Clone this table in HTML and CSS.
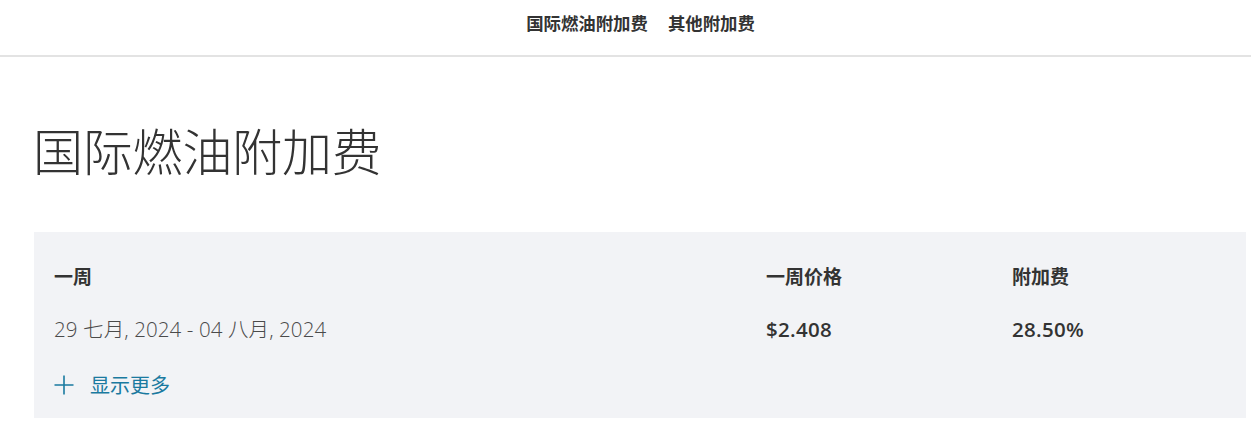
FILE: index.html
```html
<!DOCTYPE html>
<html lang="zh-CN">
<head>
<meta charset="utf-8">
<title>国际燃油附加费</title>
<link rel="stylesheet" href="styles.css">
</head>
<body>
<header class="topbar">
  <nav class="topnav">
    <a class="topnav-link" href="#intl">国际燃油附加费</a>
    <a class="topnav-link" href="#other">其他附加费</a>
  </nav>
</header>
<main class="content">
  <h1 class="page-title" id="intl">国际燃油附加费</h1>
  <section class="panel">
    <div class="row row-head">
      <div class="cell cell-week">一周</div>
      <div class="cell cell-price">一周价格</div>
      <div class="cell cell-fee">附加费</div>
    </div>
    <div class="row row-data">
      <div class="cell cell-week date">29 七月, 2024 - 04 八月, 2024</div>
      <div class="cell cell-price value">$2.408</div>
      <div class="cell cell-fee value">28.50%</div>
    </div>
    <a class="show-more" href="#more">
      <svg class="plus" width="20" height="20" viewBox="0 0 20 20" aria-hidden="true">
        <path d="M10 0.5V19.5M0.5 10H19.5" stroke="currentColor" stroke-width="1.6" fill="none"/>
      </svg>
      <span>显示更多</span>
    </a>
  </section>
</main>
</body>
</html>
```
FILE: styles.css
```css
html, body {
  margin: 0;
  padding: 0;
  background: #ffffff;
}
body {
  font-family: "Open Sans", "Noto Sans CJK SC", sans-serif;
  color: #333333;
}
.topbar {
  height: 55px;
  border-bottom: 2px solid #e3e3e3;
  display: flex;
  align-items: center;
  justify-content: center;
}
.topnav {
  display: flex;
  gap: 20px;
  margin-left: 30px;
  margin-top: -11px;
}
.topnav-link {
  font-family: "Noto Sans CJK SC", sans-serif;
  font-size: 17.4px;
  font-weight: 700;
  color: #333333;
  text-decoration: none;
}
.content {
  padding: 0 4px 0 34px;
}
.page-title {
  margin: 62px 0 53px -1px;
  font-family: "Noto Sans CJK SC", sans-serif;
  font-size: 50px;
  font-weight: 300;
  line-height: 1.2;
  color: #333333;
  letter-spacing: -0.2px;
}
.panel {
  background: #f2f3f6;
  padding: 30px 20px 19px;
  width: 1212px;
  box-sizing: border-box;
}
.row {
  display: grid;
  grid-template-columns: 712px 246px 1fr;
}
.row-head {
  font-family: "Noto Sans CJK SC", sans-serif;
  font-size: 19px;
  font-weight: 700;
  line-height: 28px;
  color: #333333;
}
.row-data {
  margin-top: 25px;
  font-size: 20.5px;
  line-height: 28px;
}
.date {
  font-weight: 300;
  color: #4a4a4a;
  font-family: "Open Sans", "Noto Sans CJK SC", sans-serif;
  letter-spacing: 0.1px;
}
.value {
  font-weight: 600;
  color: #333333;
  letter-spacing: 0.3px;
}
.show-more {
  margin-top: 28px;
  display: flex;
  align-items: center;
  gap: 16px;
  color: #1a7aa0;
  text-decoration: none;
  font-family: "Noto Sans CJK SC", sans-serif;
  font-size: 20px;
  line-height: 28px;
}
.plus {
  color: #1a7aa0;
  display: block;
}
```
